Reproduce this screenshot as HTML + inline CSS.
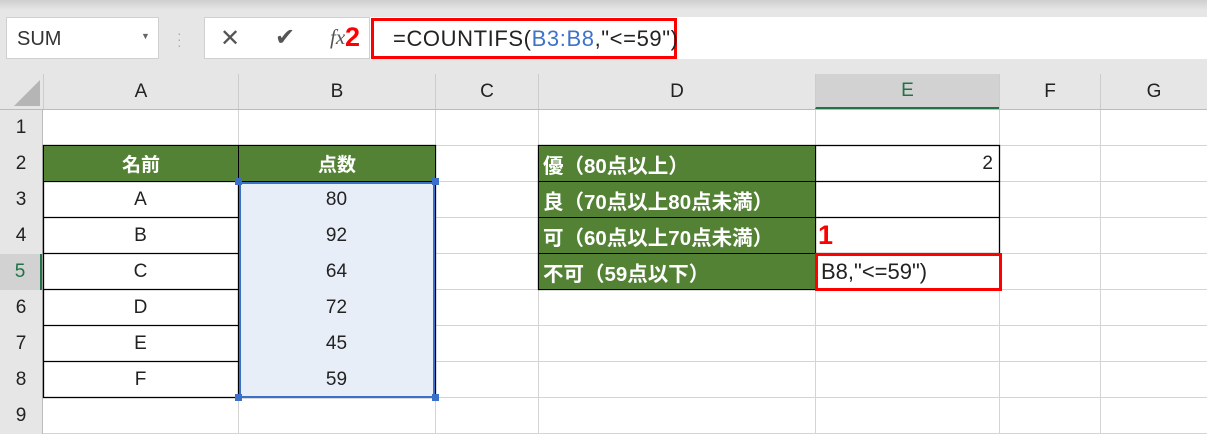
<!DOCTYPE html>
<html><head><meta charset="utf-8"><style>
*{margin:0;padding:0;box-sizing:border-box}
body{width:1207px;height:434px;overflow:hidden;background:#fff;position:relative;font-family:"Liberation Sans","Noto Sans CJK JP",sans-serif}
.a{position:absolute}
.hdr{background:#e6e6e6;color:#222;font-size:19px;display:flex;align-items:center;justify-content:center}
.cell{display:flex;align-items:center;justify-content:center;font-size:19px;color:#222}
.g{background:#548235;color:#fff;font-weight:bold;border:1.5px solid #000}
</style></head><body>
<div class="a" style="left:0;top:0;width:1207px;height:74px;background:linear-gradient(#cfcfcf,#e6e6e6 10px)"></div>
<div class="a" style="left:6px;top:17px;width:153px;height:42px;background:#fff;border:1px solid #d0d0d0;font-size:20px;color:#333;padding:10px 0 0 10px">SUM<span class="a" style="left:134px;top:13px;font-size:9px;color:#666">▼</span></div>
<div class="a" style="left:177px;top:30px;color:#aaa;font-size:14px;line-height:6px">·<br>·<br>·</div>
<div class="a" style="left:204px;top:17px;width:166px;height:42px;background:#fff;border:1px solid #d0d0d0"></div>
<div class="a" style="left:220px;top:24px;font-size:24px;color:#555">✕</div>
<div class="a" style="left:275px;top:23px;font-size:24px;color:#555">✔</div>
<div class="a" style="left:330px;top:25px;font-size:21px;color:#555;font-style:italic;font-family:'Liberation Serif',serif">fx</div>
<div class="a" style="left:345px;top:22px;font-size:27px;color:#f00;font-weight:bold">2</div>
<div class="a" style="left:370px;top:17px;width:837px;height:42px;background:#fff"></div>
<div class="a" style="left:371px;top:18px;width:306px;height:41px;border:3px solid #f00;font-size:22px;letter-spacing:0.6px;color:#222;padding:5px 0 0 19px;white-space:nowrap">=COUNTIFS(<span style="color:#3d73c9">B3:B8</span>,"&lt;=59")</div>
<div class="a hdr" style="left:0;top:74px;width:1207px;height:36px;border-bottom:1px solid #bbb"></div>
<svg class="a" style="left:8px;top:78px" width="34" height="30"><polygon points="32,2 32,28 6,28" fill="#b5b5b5"/></svg>
<div class="a hdr" style="left:43px;top:74px;width:195px;height:35px;border-left:1px solid #ccc">A</div>
<div class="a hdr" style="left:238px;top:74px;width:197px;height:35px;border-left:1px solid #ccc">B</div>
<div class="a hdr" style="left:435px;top:74px;width:103px;height:35px;border-left:1px solid #ccc">C</div>
<div class="a hdr" style="left:538px;top:74px;width:277px;height:35px;border-left:1px solid #ccc">D</div>
<div class="a hdr" style="left:815px;top:74px;width:184px;height:35px;border-left:1px solid #ccc;background:#d2d2d2;color:#217346;border-bottom:2px solid #217346">E</div>
<div class="a hdr" style="left:999px;top:74px;width:101px;height:35px;border-left:1px solid #ccc">F</div>
<div class="a hdr" style="left:1100px;top:74px;width:107px;height:35px;border-left:1px solid #ccc">G</div>
<div class="a" style="left:0;top:110px;width:43px;height:324px;background:#e6e6e6;border-right:1px solid #bbb"></div>
<div class="a hdr" style="left:0;top:110px;width:42px;height:36px">1</div>
<div class="a hdr" style="left:0;top:146px;width:42px;height:36px">2</div>
<div class="a hdr" style="left:0;top:182px;width:42px;height:36px">3</div>
<div class="a hdr" style="left:0;top:218px;width:42px;height:36px">4</div>
<div class="a hdr" style="left:0;top:254px;width:42px;height:36px;background:#d2d2d2;color:#217346;border-right:2px solid #217346">5</div>
<div class="a hdr" style="left:0;top:290px;width:42px;height:36px">6</div>
<div class="a hdr" style="left:0;top:326px;width:42px;height:36px">7</div>
<div class="a hdr" style="left:0;top:362px;width:42px;height:36px">8</div>
<div class="a hdr" style="left:0;top:398px;width:42px;height:36px">9</div>
<svg class="a" style="left:0;top:0" width="1207" height="434">
<g stroke="#d4d4d4" stroke-width="1">
<line x1="43" y1="145.5" x2="1207" y2="145.5"/><line x1="43" y1="181.5" x2="1207" y2="181.5"/><line x1="43" y1="217.5" x2="1207" y2="217.5"/><line x1="43" y1="253.5" x2="1207" y2="253.5"/><line x1="43" y1="289.5" x2="1207" y2="289.5"/><line x1="43" y1="325.5" x2="1207" y2="325.5"/><line x1="43" y1="361.5" x2="1207" y2="361.5"/><line x1="43" y1="397.5" x2="1207" y2="397.5"/><line x1="43" y1="433.5" x2="1207" y2="433.5"/>
<line x1="238.5" y1="110" x2="238.5" y2="434"/><line x1="435.5" y1="110" x2="435.5" y2="434"/><line x1="538.5" y1="110" x2="538.5" y2="434"/><line x1="815.5" y1="110" x2="815.5" y2="434"/><line x1="999.5" y1="110" x2="999.5" y2="434"/><line x1="1100.5" y1="110" x2="1100.5" y2="434"/>
</g>
<g stroke="#000" stroke-width="1.3" fill="none">
<rect x="43.5" y="145.5" width="392" height="252"/>
<line x1="43" y1="217.5" x2="238" y2="217.5"/><line x1="43" y1="253.5" x2="238" y2="253.5"/><line x1="43" y1="289.5" x2="238" y2="289.5"/><line x1="43" y1="325.5" x2="238" y2="325.5"/><line x1="43" y1="361.5" x2="238" y2="361.5"/><line x1="43" y1="181.5" x2="238" y2="181.5"/>
<line x1="238.5" y1="145" x2="238.5" y2="398"/>
<rect x="538.5" y="145.5" width="461" height="144"/>
<line x1="538" y1="181.5" x2="1000" y2="181.5"/><line x1="538" y1="217.5" x2="1000" y2="217.5"/><line x1="538" y1="253.5" x2="1000" y2="253.5"/><line x1="815.5" y1="145" x2="815.5" y2="290"/>
</g>
</svg>
<div class="a cell g" style="left:43px;top:145px;width:196px;height:37px">名前</div>
<div class="a cell g" style="left:238px;top:145px;width:198px;height:37px">点数</div>
<div class="a" style="left:239px;top:182px;width:196px;height:216px;background:#e8eef8;border:2px solid #3a70c8"></div>
<div class="a" style="left:235px;top:178px;width:7px;height:7px;background:#3a70c8"></div>
<div class="a" style="left:432px;top:178px;width:7px;height:7px;background:#3a70c8"></div>
<div class="a" style="left:235px;top:394px;width:7px;height:7px;background:#3a70c8"></div>
<div class="a" style="left:432px;top:394px;width:7px;height:7px;background:#3a70c8"></div>
<div class="a cell" style="left:43px;top:182px;width:195px;height:36px">A</div>
<div class="a cell" style="left:43px;top:218px;width:195px;height:36px">B</div>
<div class="a cell" style="left:43px;top:254px;width:195px;height:36px">C</div>
<div class="a cell" style="left:43px;top:290px;width:195px;height:36px">D</div>
<div class="a cell" style="left:43px;top:326px;width:195px;height:36px">E</div>
<div class="a cell" style="left:43px;top:362px;width:195px;height:36px">F</div>
<div class="a cell" style="left:238px;top:182px;width:197px;height:36px">80</div>
<div class="a cell" style="left:238px;top:218px;width:197px;height:36px">92</div>
<div class="a cell" style="left:238px;top:254px;width:197px;height:36px">64</div>
<div class="a cell" style="left:238px;top:290px;width:197px;height:36px">72</div>
<div class="a cell" style="left:238px;top:326px;width:197px;height:36px">45</div>
<div class="a cell" style="left:238px;top:362px;width:197px;height:36px">59</div>
<div class="a cell g" style="left:538px;top:145px;width:278px;height:37px;justify-content:flex-start;padding-left:4px;font-size:20.5px">優（80点以上）</div>
<div class="a cell g" style="left:538px;top:181px;width:278px;height:37px;justify-content:flex-start;padding-left:4px;font-size:20.5px">良（70点以上80点未満）</div>
<div class="a cell g" style="left:538px;top:217px;width:278px;height:37px;justify-content:flex-start;padding-left:4px;font-size:20.5px">可（60点以上70点未満）</div>
<div class="a cell g" style="left:538px;top:253px;width:278px;height:37px;justify-content:flex-start;padding-left:4px;font-size:20.5px">不可（59点以下）</div>
<div class="a cell" style="left:816px;top:146px;width:182px;height:36px;justify-content:flex-end;padding-right:5px">2</div>
<div class="a" style="left:818px;top:220px;font-size:27px;color:#f00;font-weight:bold">1</div>
<div class="a cell" style="left:815px;top:253px;width:187px;height:38px;border:3px solid #f00;background:#fff;justify-content:flex-start;padding-left:3px;font-size:22px">B8,"&lt;=59")</div>
</body></html>
